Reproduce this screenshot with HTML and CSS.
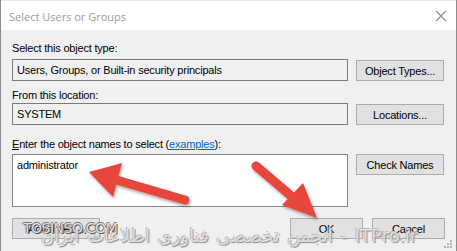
FILE: index.html
```html
<!DOCTYPE html>
<html lang="en">
<head>
    <meta charset="UTF-8">
    <title>Select Users or Groups</title>
    <link rel="stylesheet" href="styles.css">
</head>
<body>
<div class="window">
    <div class="titlebar">
        <span class="title">Select Users or Groups</span>
        <svg class="close" width="12" height="12" viewBox="0 0 12 12">
            <path d="M1 1 L11 11 M11 1 L1 11" stroke="#8a8a8a" stroke-width="1.1" fill="none"/>
        </svg>
    </div>
    <div class="content">
        <div class="row">
            <div class="field">
                <label class="lbl lbl-first">Select this object type:</label>
                <div class="box readonly">Users, Groups, or Built-in security principals</div>
            </div>
            <button class="btn btn-side">Object Types...</button>
        </div>
        <div class="row">
            <div class="field">
                <label class="lbl lbl-second">From this location:</label>
                <div class="box readonly">SYSTEM</div>
            </div>
            <button class="btn btn-side">Locations...</button>
        </div>
        <div class="row">
            <div class="field">
                <label class="lbl lbl-third"><u>E</u>nter the object names to select (<a href="#" class="link">examples</a>):</label>
                <div class="box names">administrator</div>
            </div>
            <button class="btn btn-side btn-check">Check Names</button>
        </div>
        <div class="footer">
            <button class="btn btn-adv">Advanced...</button>
            <div class="spacer"></div>
            <button class="btn btn-ok">OK</button>
            <button class="btn btn-cancel">Cancel</button>
        </div>
    </div>

    <svg class="arrows" width="457" height="251" viewBox="0 0 457 251">
        <defs>
            <filter id="shadow" x="-20%" y="-20%" width="140%" height="140%">
                <feDropShadow dx="1" dy="2" stdDeviation="1.5" flood-color="#000" flood-opacity="0.35"/>
            </filter>
        </defs>
        <g filter="url(#shadow)" fill="#e8453c" stroke="#e8453c">
            <line x1="184" y1="200" x2="112" y2="179" stroke-width="9" stroke-linecap="round"/>
            <polygon points="88,172 121,163 112,197" stroke="none"/>
            <line x1="255" y1="166" x2="295" y2="200" stroke-width="9" stroke-linecap="round"/>
            <polygon points="316,218 281,205 302,183" stroke="none"/>
        </g>
    </svg>

    <div class="mark mark-site">TOSINSO.COM</div>
    <div class="mark mark-itpro">انجمن تخصصی فناوری اطلاعات ایران - ITPro.ir</div>

    <svg class="grip" width="9" height="9" viewBox="0 0 9 9">
        <rect x="7" y="1" width="2" height="2" fill="#b5b5b5"/>
        <rect x="4" y="4" width="2" height="2" fill="#b5b5b5"/>
        <rect x="7" y="4" width="2" height="2" fill="#b5b5b5"/>
        <rect x="1" y="7" width="2" height="2" fill="#b5b5b5"/>
        <rect x="4" y="7" width="2" height="2" fill="#b5b5b5"/>
        <rect x="7" y="7" width="2" height="2" fill="#b5b5b5"/>
    </svg>
</div>
</body>
</html>
```

FILE: styles.css
```css
body {
    margin: 0;
    background: #f0f0f0;
    font-family: "Liberation Sans", Arial, sans-serif;
    font-size: 11px;
    letter-spacing: -0.2px;
    color: #000;
}

.window {
    position: relative;
    width: 457px;
    height: 251px;
    overflow: hidden;
    background: #f0f0f0;
    box-sizing: border-box;
    border-left: 1px solid #8c8c8c;
    border-right: 1px solid #8c8c8c;
}

.titlebar {
    height: 30px;
    background: #fff;
    display: flex;
    align-items: center;
    justify-content: space-between;
    padding: 0 9px 0 9px;
    margin: 0 -1px;
    border-top: 1px solid #e8e8e8;
    box-sizing: border-box;
}

.title {
    font-family: "Open Sans", "Noto Sans", sans-serif;
    font-size: 11px;
    letter-spacing: 0;
    color: #9a9a9a;
    margin-top: 1px;
}

.close {
    margin-right: 1px;
}

.content {
    padding: 0 11px 0 11px;
}

.row {
    display: flex;
    gap: 8px;
    align-items: flex-end;
}

.field {
    width: 336px;
}

.lbl {
    display: block;
    line-height: 14px;
    margin-bottom: 4px;
}

.lbl-first {
    margin-top: 11px;
}

.lbl-second {
    margin-top: 7px;
    margin-bottom: 1px;
}

.lbl-third {
    margin-top: 12px;
    margin-bottom: 3px;
}

.link {
    color: #0066cc;
}

.box {
    border: 1px solid #7a7a7a;
    height: 22px;
    box-sizing: border-box;
    padding: 3px 4px;
    line-height: 14px;
}

.readonly {
    background: #f0f0f0;
}

.names {
    background: #fff;
    height: 53px;
    border-color: #828790;
}

.btn {
    font-family: "Liberation Sans", Arial, sans-serif;
    font-size: 11px;
    letter-spacing: -0.2px;
    background: #e1e1e1;
    border: 1px solid #adadad;
    height: 21px;
    padding: 0;
    color: #000;
}

.btn-side {
    width: 88px;
    flex: none;
}

.btn-check {
    align-self: flex-end;
    margin-bottom: 32px;
}

.footer {
    display: flex;
    gap: 9px;
    margin-top: 11px;
}

.spacer {
    flex: 1;
}

.btn-adv {
    width: 88px;
}

.btn-ok,
.btn-cancel {
    width: 73px;
}

.arrows {
    position: absolute;
    left: 0;
    top: 0;
}

.mark {
    position: absolute;
    white-space: nowrap;
    font-family: "DejaVu Sans", sans-serif;
    letter-spacing: 0;
    color: rgba(245, 245, 245, 0.85);
}

.mark-site {
    left: 22px;
    top: 220px;
    font-size: 14px;
    letter-spacing: -0.5px;
    text-shadow: 1px 1px 0 #555, -1px 0 0 #777, 0 -1px 0 #777;
}

.mark-itpro {
    left: 40px;
    top: 225px;
    font-size: 18px;
    word-spacing: 2px;
    color: rgba(235, 235, 235, 0.8);
    text-shadow: 1px 1px 1px #8a8a8a, -1px -1px 0 #bbb;
}

.grip {
    position: absolute;
    right: 4px;
    bottom: 3px;
}
```
